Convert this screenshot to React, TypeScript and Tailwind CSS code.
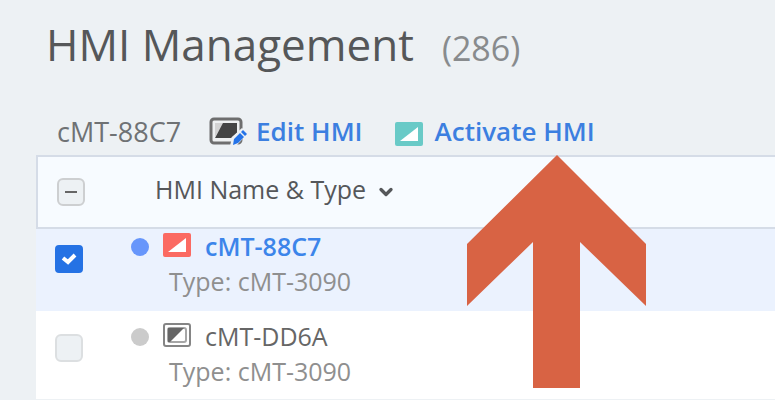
import { ChevronDown } from "lucide-react";
import clsx from "clsx";

type Device = {
  name: string;
  type: string;
  active: boolean;
};

const devices: Device[] = [
  { name: "cMT-88C7", type: "cMT-3090", active: true },
  { name: "cMT-DD6A", type: "cMT-3090", active: false },
];

const ScreenIcon = ({ className }: { className?: string }) => (
  <svg viewBox="0 0 28 24" className={className} aria-hidden="true">
    <rect width="28" height="24" rx="2" fill="currentColor" />
    <path d="M5 19 23 5v14z" fill="#fff" />
  </svg>
);

const IdleScreenIcon = () => (
  <svg viewBox="0 0 28 24" className="h-6 w-7 shrink-0" aria-hidden="true">
    <rect x="1" y="1" width="26" height="22" rx="2" fill="#fff" stroke="#858585" strokeWidth="2" />
    <rect x="5" y="5" width="18" height="14" rx="2" fill="#fff" stroke="#a6a6a6" strokeWidth="2" />
    <path d="M5 5h16L7 19H5z" fill="#666" />
  </svg>
);

const EditScreenIcon = () => (
  <svg viewBox="0 0 39 29" className="h-[29px] w-[39px] shrink-0" aria-hidden="true">
    <rect x="2" y="2" width="30" height="24" rx="3" fill="#eef0f1" stroke="#6e6e6e" strokeWidth="3" />
    <path d="M6 20V6h9z" fill="#d2d2d2" />
    <path d="M14 6h14v10l-6 5H6z" fill="#444" />
    <path d="m21 29 2-9 10-9 6 5-11 12z" fill="#edf1f4" />
    <path d="m24 28 1-6 6-6 4 4-6 6zM32 15l2-2 4 4-2 2z" fill="#2473e8" />
  </svg>
);

const DeviceRow = ({ device }: { device: Device }) => (
  <tr className={clsx("align-top", device.active ? "bg-[#ebf2fe]" : "bg-white")}>
    <td className={clsx("pl-[19px]", device.active ? "pt-4" : "pt-[23px]")}>
      <span className="relative flex size-7">
        <input
          type="checkbox"
          aria-label={`Select ${device.name}`}
          defaultChecked={device.active}
          className="peer size-7 appearance-none rounded-md border-2 border-[#dcdfe1] bg-[#edf1f4] checked:rounded-sm checked:border-[#2572e4] checked:bg-[#2572e4]"
        />
        <svg
          viewBox="0 0 28 28"
          className="pointer-events-none absolute inset-0 hidden peer-checked:block"
          aria-hidden="true"
        >
          <path d="m8 13 5 4 7-7" fill="none" stroke="#fff" strokeWidth="4" />
        </svg>
      </span>
    </td>
    <td className={clsx("text-[25px]/[35px]", device.active ? "pb-3" : "pt-2 pb-2.5")}>
      <div className="flex items-center">
        <span
          className={clsx(
            "mr-3.5 size-[18px] rounded-full",
            device.active ? "bg-[#6796fb]" : "bg-[#cbcbcb]",
          )}
        />
        <span className="mr-3.5 pb-1">
          {device.active ? (
            <ScreenIcon className="h-6 w-7 text-[#fb6a62]" />
          ) : (
            <IdleScreenIcon />
          )}
        </span>
        <a
          href="#device"
          className={device.active ? "font-semibold text-[#3c85ea]" : "text-[#666]"}
        >
          {device.name}
        </a>
      </div>
      <p className="pl-[38px] text-[#8f8f8f]">Type: {device.type}</p>
    </td>
  </tr>
);

const App = () => {
  return (
    <main className="min-h-screen overflow-hidden bg-[#edf1f4] pt-3.5 pl-9 font-['Open_Sans','Noto_Sans',sans-serif]">
      <header className="flex items-baseline gap-7 pl-2.5 whitespace-nowrap">
        <h1 className="text-[44px]/[60px] text-[#555759]">HMI Management</h1>
        <span className="text-[34px]/[60px] text-[#888b8d]">(286)</span>
      </header>

      <div className="mt-9 flex items-center pb-1.5 pl-[21px] text-[27px]/[35px] whitespace-nowrap">
        <span className="text-[#6f7274]">cMT-88C7</span>
        <button
          type="button"
          className="ml-7 flex items-center gap-2 text-[26px]/[35px] font-semibold text-[#3c7fe0]"
        >
          <EditScreenIcon />
          Edit HMI
        </button>
        <button
          type="button"
          className="ml-8 flex items-center gap-3 text-[26px]/[35px] font-semibold text-[#3c7fe0]"
        >
          <ScreenIcon className="mt-1 h-6 w-7 text-[#69cac7]" />
          Activate HMI
        </button>
      </div>

      <section className="relative">
        <table className="w-full border-separate border-spacing-0 whitespace-nowrap">
          <thead className="bg-[#f7fbff]">
            <tr>
              <th className="h-[74px] w-[95px] border-y-2 border-l-2 border-[#d5dce7] pl-[19px]">
                <span className="relative flex size-7">
                  <input
                    type="checkbox"
                    aria-label="Select all"
                    className="size-7 appearance-none rounded-md border-2 border-[#cdcfd1] bg-[#edf1f4]"
                  />
                  <span className="pointer-events-none absolute top-[13px] left-2 h-0.5 w-3 bg-[#666]" />
                </span>
              </th>
              <th className="border-y-2 border-[#d5dce7] pb-1.5 pl-6 text-left text-[25px]/[35px] font-normal text-[#55575a]">
                <button type="button" className="flex items-center gap-2.5">
                  HMI Name &amp; Type
                  <ChevronDown className="mt-1.5 size-5" strokeWidth={4} />
                </button>
              </th>
            </tr>
          </thead>
          <tbody>
            {devices.map((device) => (
              <DeviceRow key={device.name} device={device} />
            ))}
          </tbody>
        </table>

        <svg
          viewBox="0 0 179 233"
          className="pointer-events-none absolute top-0 left-[431px] h-[233px] w-[179px]"
          aria-hidden="true"
        >
          <path d="M90 0 179 89v62l-66-64v146H66V87L0 151V89z" fill="#d86344" />
        </svg>
      </section>
    </main>
  );
};

export default App;
